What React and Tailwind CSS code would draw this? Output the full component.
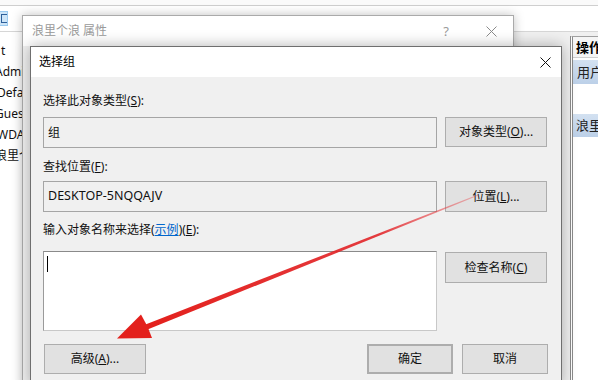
import React from "react";

const F = "font-['Noto_Sans','Noto_Sans_CJK_SC',sans-serif]";

function Btn({ children, className = "" }) {
  return (
    <div
      className={`flex items-center justify-center bg-[#e1e1e1] border border-[#adadad] text-[12px] text-[#111] ${className}`}
    >
      {children}
    </div>
  );
}

function XIcon({ size = 11, color = "#222", sw = 1 }) {
  return (
    <svg width={size} height={size} viewBox="0 0 11 11">
      <path d="M0.5 0.5 L10.5 10.5 M10.5 0.5 L0.5 10.5" stroke={color} strokeWidth={sw} fill="none" />
    </svg>
  );
}

export default function App() {
  return (
    <div className={`relative w-[598px] h-[380px] overflow-hidden bg-[#f0f0f0] ${F} text-[12px] leading-none`}>
      {/* Background main window */}
      <div className="flex flex-col w-full h-full">
        <div className="h-[6px] bg-[#fafafa] border-b border-[#cfcfcf]" />
        <div className="h-[26px] bg-white border-b border-[#d6d6d6] flex items-center">
          <div className="w-[8px] h-[15px] bg-[#cce4f7] border border-[#99c9ef] border-l-0 flex items-center justify-end overflow-hidden">
            <div className="w-[6px] h-[9px] border border-[#2d5f9a] border-r-0" />
          </div>
        </div>
        <div className="flex flex-1">
          <div className="w-[22px] bg-white flex flex-col overflow-hidden text-[12px] text-[#111] pt-[13px] gap-[9px] whitespace-nowrap">
            <div className="ml-[1px] h-[12px]">t</div>
            <div className="ml-[-5px] h-[12px]">Admi</div>
            <div className="ml-[-3px] h-[12px]">Defau</div>
            <div className="ml-[-5px] h-[12px]">Guest</div>
            <div className="ml-[-3px] h-[12px]">WDA</div>
            <div className="ml-[-5px] h-[12px]">浪里个浪</div>
          </div>
          <div className="flex-1" />
          <div className="w-[28px] mt-[4px] border-l-[3px] border-double border-[#8a8a8a] border-t border-t-[#a0a0a0] bg-white flex flex-col">
            <div className="h-[21px] bg-[#f5f5f5] border-b border-[#d0d0d0] flex items-center pl-[3px] font-bold text-[13px] text-black whitespace-nowrap overflow-hidden">
              操作
            </div>
            <div className="mt-[2px] h-[24px] bg-gradient-to-b from-[#d3e1f1] to-[#bcd0e8] flex items-center pl-[4px] text-[13px] text-[#222] whitespace-nowrap overflow-hidden">
              用户
            </div>
            <div className="h-[30px]" />
            <div className="h-[23px] bg-gradient-to-b from-[#d3e1f1] to-[#bcd0e8] flex items-center pl-[3px] text-[13px] text-[#222] whitespace-nowrap overflow-hidden">
              浪里
            </div>
          </div>
        </div>
      </div>

      {/* Properties dialog */}
      <div className="absolute left-[22px] top-[15px] w-[492px] h-[380px] border border-[#aaaaaa] bg-[#f0f0f0] shadow-[0_0_10px_rgba(0,0,0,0.25)] flex flex-col">
        <div className="h-[30px] bg-white flex items-center pl-[9px] pr-[16px] text-[#9a9a9a] text-[12px]">
          <span className="flex-1">浪里个浪 属性</span>
          <span className="text-[13px] mr-[37px]">?</span>
          <XIcon size={11} color="#8a8a8a" />
        </div>
      </div>

      {/* Select group dialog */}
      <div className="absolute left-[30px] top-[46px] w-[532px] h-[340px] border border-[#6f6f6f] bg-[#f0f0f0] shadow-[0_0_14px_rgba(0,0,0,0.3)] flex flex-col">
        <div className="h-[30px] bg-white flex items-center justify-between pl-[8px] pr-[10px] text-[12px] text-black">
          <span>选择组</span>
          <XIcon size={11} color="#111" />
        </div>
        <div className="flex flex-col pl-[12px] pr-[13px] pt-[16px] text-[#111]">
          <div className="h-[16px] flex items-center">
            选择此对象类型(<u>S</u>):
          </div>
          <div className="mt-[8px] flex gap-[8px] items-start">
            <div className="w-[394px] h-[31px] border border-[#a5a5a5] flex items-center pl-[4px]">组</div>
            <Btn className="w-[102px] h-[30px]">
              对象类型(<u>O</u>)...
            </Btn>
          </div>
          <div className="mt-[11px] h-[16px] flex items-center">
            查找位置(<u>F</u>):
          </div>
          <div className="mt-[6px] flex gap-[8px] items-start">
            <div className="w-[394px] h-[31px] border border-[#a5a5a5] flex items-center pl-[4px] text-[12.5px]">
              DESKTOP-5NQQAJV
            </div>
            <Btn className="w-[102px] h-[31px]">
              位置(<u>L</u>)...
            </Btn>
          </div>
          <div className="mt-[10px] h-[16px] flex items-center">
            输入对象名称来选择(<span className="text-[#0066cc] underline">示例</span>)(<u>E</u>):
          </div>
          <div className="mt-[13px] flex gap-[8px] items-start">
            <div className="w-[394px] h-[80px] bg-white border border-[#c8c8c8] border-t-[#8a8a8a] border-l-[#9a9a9a] pl-[3px] pt-[4px]">
              <div className="w-[1px] h-[16px] bg-black" />
            </div>
            <Btn className="w-[102px] h-[31px] mt-[1px]">
              检查名称(<u>C</u>)
            </Btn>
          </div>
          <div className="mt-[13px] flex items-center">
            <Btn className="w-[102px] h-[30px] ml-[1px]">
              高级(<u>A</u>)...
            </Btn>
            <div className="flex-1" />
            <Btn className="w-[86px] h-[30px] border-2 border-[#0078d7]">确定</Btn>
            <Btn className="w-[86px] h-[30px] ml-[9px]">取消</Btn>
          </div>
        </div>
      </div>

      {/* Red arrow annotation */}
      <svg className="absolute left-0 top-0 pointer-events-none" width="598" height="380" viewBox="0 0 598 380">
        <defs>
          <linearGradient id="ag" x1="478" y1="195" x2="146" y2="327" gradientUnits="userSpaceOnUse">
            <stop offset="0" stopColor="#e8454a" stopOpacity="0.35" />
            <stop offset="0.3" stopColor="#e2262a" stopOpacity="0.9" />
            <stop offset="1" stopColor="#e3201c" stopOpacity="1" />
          </linearGradient>
        </defs>
        <polygon points="478,194.6 478.4,195.6 147.5,329.5 145.5,324.5" fill="url(#ag)" />
        <polygon points="117,338.5 141,314.5 147.5,326.5 152,338" fill="#e3201c" />
      </svg>
    </div>
  );
}
